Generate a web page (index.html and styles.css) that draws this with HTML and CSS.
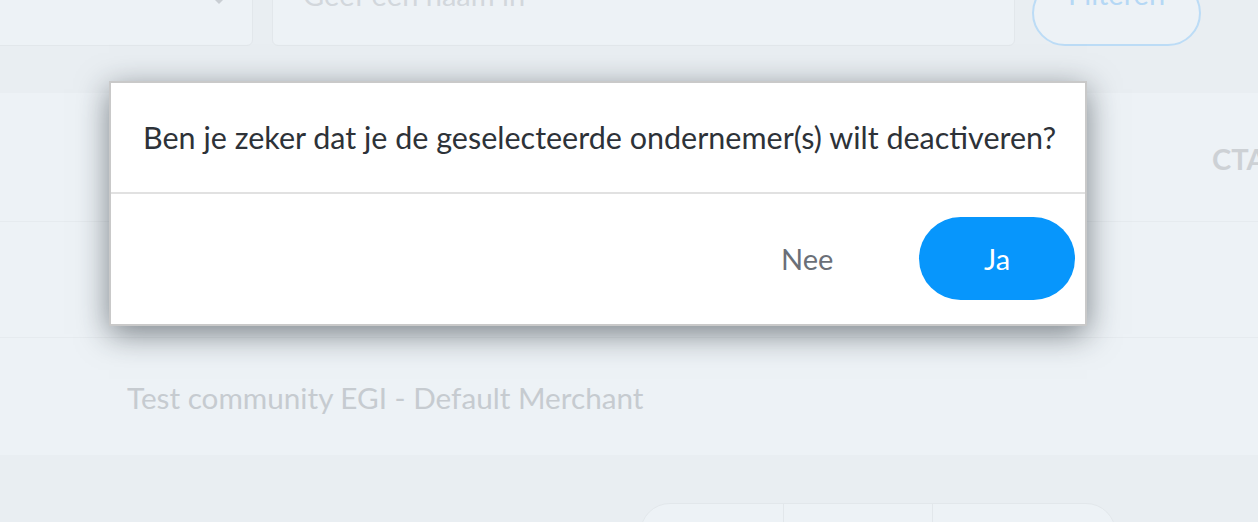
FILE: index.html
```html
<!DOCTYPE html>
<html lang="nl">
<head>
<meta charset="utf-8">
<link rel="stylesheet" href="styles.css">
</head>
<body>
<div class="page">
  <div class="filters">
    <div class="select"><span class="caret"></span></div>
    <div class="input"><span class="placeholder">Geef een naam in</span></div>
    <div class="filter-btn"><span>Filteren</span></div>
  </div>
  <div class="card">
    <div class="row head"><span class="cta">CTA</span></div>
    <div class="row"></div>
    <div class="row"><span class="name">Test community EGI - Default Merchant</span></div>
  </div>
  <div class="pager-wrap">
    <div class="pager"><div class="pg"></div><div class="pg pg2"></div><div class="pg"></div></div>
  </div>
</div>
<div class="modal">
  <div class="modal-body">Ben je zeker dat je de geselecteerde ondernemer(s) wilt deactiveren?</div>
  <div class="modal-footer">
    <button class="btn-no">Nee</button>
    <button class="btn-yes">Ja</button>
  </div>
</div>
</body>
</html>
```
FILE: styles.css
```css
* { box-sizing: border-box; }
html, body { margin: 0; padding: 0; }
body {
  width: 1258px;
  height: 522px;
  overflow: hidden;
  background: #e9eef2;
  font-family: Lato, "Open Sans", sans-serif;
  position: relative;
}
.page { display: flex; flex-direction: column; height: 522px; overflow: hidden; }
.filters {
  display: flex;
  align-items: flex-end;
  flex: 0 0 66px;
  margin-top: -20px;
}
.select {
  width: 273px;
  height: 66px;
  margin-left: -20px;
  background: #edf2f6;
  border: 1px solid #e2e7eb;
  border-radius: 6px;
  position: relative;
}
.caret {
  position: absolute;
  right: 28px;
  top: 18px;
  width: 0; height: 0;
  border-left: 5px solid transparent;
  border-right: 5px solid transparent;
  border-top: 5px solid #c9ced3;
}
.input {
  width: 743px;
  height: 66px;
  margin-left: 19px;
  background: #edf2f6;
  border: 1px solid #e2e7eb;
  border-radius: 6px;
  padding-left: 30px;
}
.placeholder {
  font-size: 29px;
  color: #d2d7dc;
  line-height: 30px;
  display: block;
  margin-top: -1px;
}
.filter-btn {
  width: 169px;
  height: 66px;
  margin-left: 17px;
  border: 2px solid #bcdcf6;
  border-radius: 33px;
  background: #edf2f6;
  display: flex;
  justify-content: center;
  color: #b5d8f5;
  font-size: 29px;
}
.filter-btn span { margin-top: -3px; line-height: 30px; }
.card {
  margin-top: 47px;
  background: #edf2f6;
  display: flex;
  flex-direction: column;
  flex: 0 0 auto;
}
.row {
  height: 116px;
  border-bottom: 1px solid #e6ebef;
  display: flex;
  align-items: center;
}
.row:last-child { border-bottom: none; height: 117px; }
.row.head { height: 129px; justify-content: flex-end; }
.cta {
  font-size: 29px;
  font-weight: 700;
  color: #cdd1d5;
  margin-right: -30px;
  width: 76px;
  margin-top: 2px;
}
.name {
  font-size: 29.7px;
  color: #c6cbd0;
  margin-left: 127px;
  margin-top: 2px;
}
.pager-wrap { display: flex; padding-top: 48px; padding-left: 640px; flex: 0 0 auto; }
.pager {
  width: 476px;
  height: 60px;
  border: 1px solid #e2e7eb;
  border-radius: 30px;
  display: flex;
  overflow: hidden;
  background: #edf2f6;
}
.pg { flex: 0 0 143px; border-right: 1px solid #e2e7eb; }
.pg.pg2 { flex: 0 0 149px; }
.pg:last-child { flex: 1; border-right: none; }

.modal {
  position: absolute;
  left: 109px;
  top: 81px;
  width: 978px;
  height: 245px;
  background: #fff;
  border: 2px solid #c9c9c9;
  box-shadow: 0 8px 30px rgba(30, 38, 46, 0.55);
  display: flex;
  flex-direction: column;
}
.modal-body {
  height: 111px;
  border-bottom: 2px solid #e1e1e1;
  display: flex;
  align-items: center;
  padding-left: 32px;
  font-size: 30.5px;
  color: #2d3238;
  padding-bottom: 2px;
  white-space: nowrap;
}
.modal-footer {
  flex: 1;
  display: flex;
  justify-content: flex-end;
  align-items: center;
  padding-right: 10px;
  padding-bottom: 2px;
}
.btn-no {
  background: none;
  border: none;
  font-family: inherit;
  font-size: 29px;
  color: #6b6f77;
  padding: 0;
  width: 52px;
  margin-right: 86px;
}
.btn-yes {
  width: 156px;
  height: 83px;
  border: none;
  border-radius: 42px;
  background: #0796fc;
  color: #fff;
  font-family: inherit;
  font-size: 29px;
}
```
